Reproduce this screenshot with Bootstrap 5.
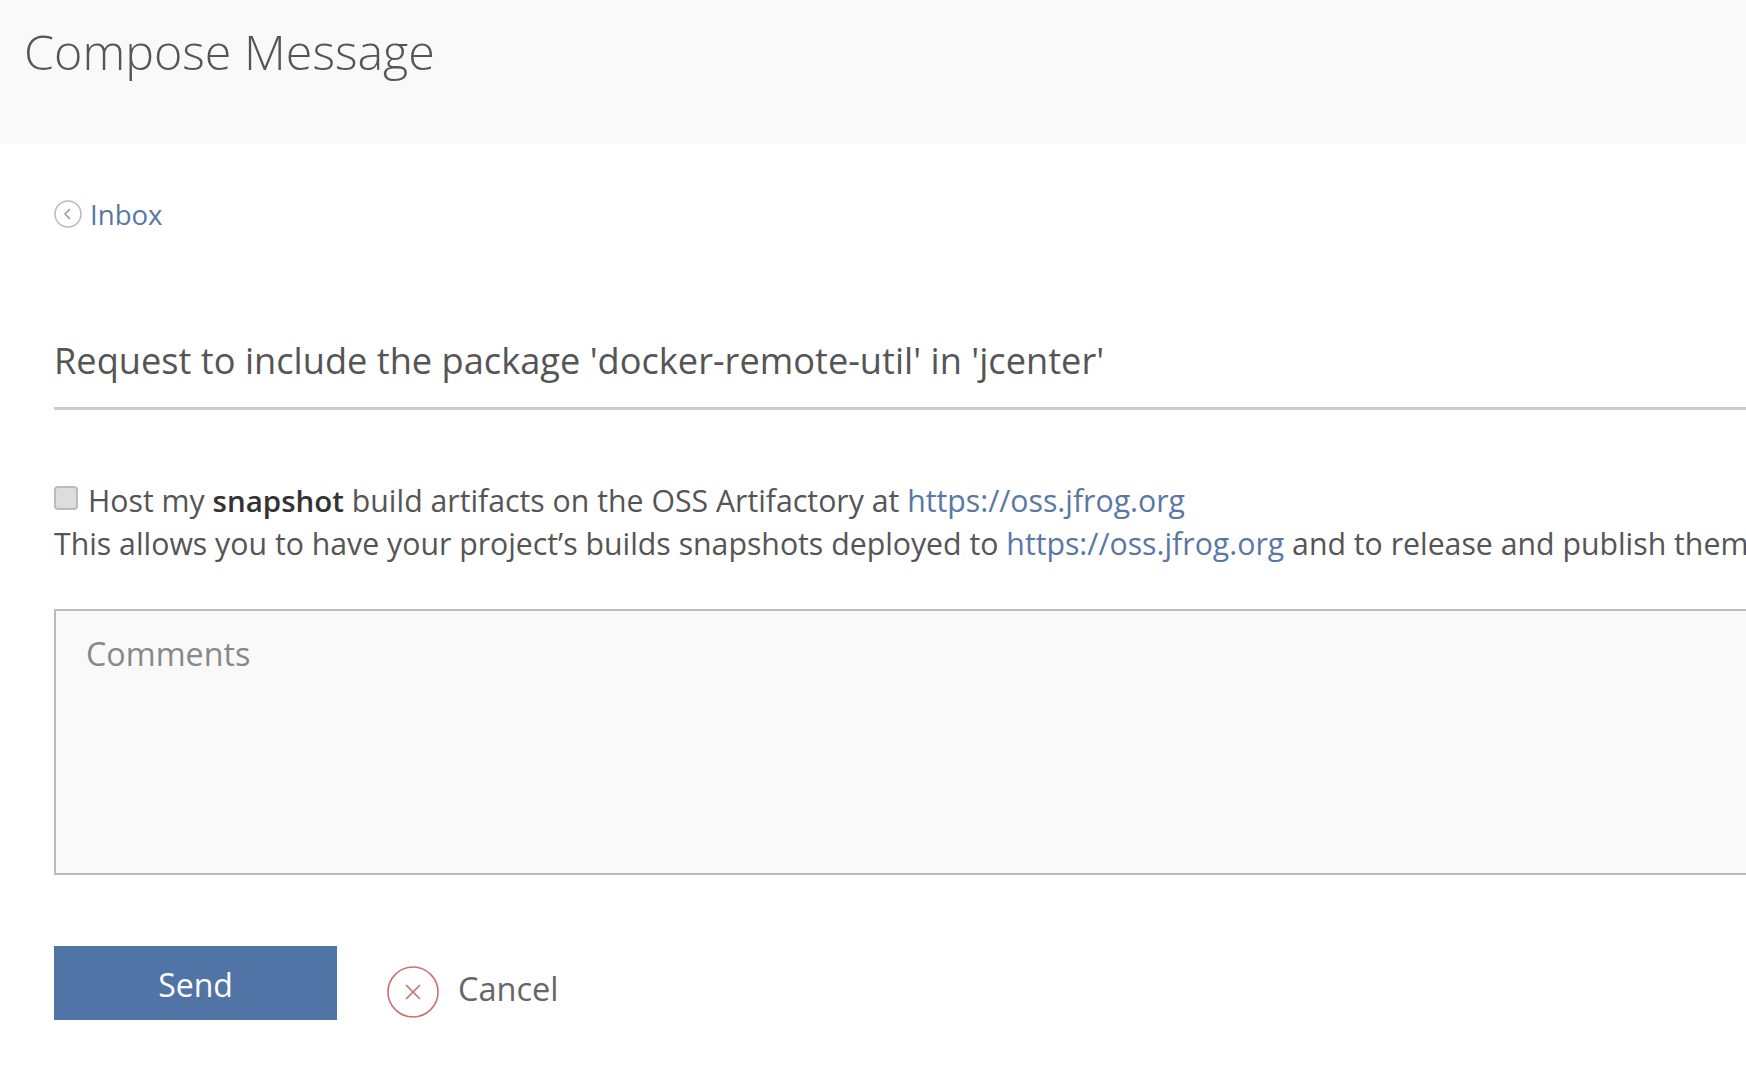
<!DOCTYPE html>
<html lang="en">
<head>
<meta charset="utf-8">
<title>Compose Message</title>
<link href="https://cdn.jsdelivr.net/npm/bootstrap@5.3.0/dist/css/bootstrap.min.css" rel="stylesheet">
<style>
html, body { height: 100%; overflow: hidden; }
body { font-family: "Open Sans", "Liberation Sans", sans-serif; color: #555; background: #fff; }
a { color: #5a77a5; text-decoration: none; }
.page-head { height: 144px; background: #f9f9f9; padding: 24px 0 0 24px; }
.page-head h1 { font-size: 48.4px; font-weight: 300; line-height: 54px; color: #555; margin: 0; }
.page-main { padding: 52px 0 0 54px; width: 1800px; }
.back-link { font-size: 27.6px; line-height: 36px; height: 36px; gap: 8px; }
.back-link svg { margin-top: -1px; }
.subject { font-size: 36.2px; line-height: 44px; color: #555; margin: 104px 0 0; padding-bottom: 25px; border-bottom: 3px solid #ccc; }
.snap-row { margin-top: 69px; font-size: 30.25px; line-height: 43px; white-space: nowrap; }
.snap-row strong { font-weight: 600; color: #333; font-size: 29.5px; }
.snap-box { width: 24px; height: 24px; margin: 0 10px 0 0; background: #ddd; border: 2px solid #bbb; border-radius: 4px; vertical-align: 2px; appearance: none; display: inline-block; }
.comment-box { width: 100%; height: 266px; margin-top: 44px; background: #f9f9f9; border: 2px solid #bbb; border-radius: 0; padding: 20px 30px; font-size: 32.3px; line-height: 44px; resize: none; color: #555; }
.comment-box::placeholder { color: #888; opacity: 1; }
.form-actions { margin-top: 71px; gap: 50px; }
.send-btn { width: 283px; height: 74px; background: #5174a6; color: #fff; border: 0; border-radius: 0; font-size: 32px; font-weight: 500; padding-top: 12px; padding-bottom: 8px; }
.send-btn:hover { background: #5174a6; color: #fff; }
.cancel-link { color: #666; font-size: 32.5px; gap: 19px; margin-top: 20px; }
.cancel-link span { margin-top: -5px; }
</style>
</head>
<body>
<header class="page-head"><h1>Compose Message</h1></header>
<main class="page-main">
  <a href="#" class="back-link d-inline-flex align-items-center">
    <svg width="28" height="28" viewBox="0 0 28 28" fill="none" aria-hidden="true"><circle cx="14" cy="14" r="13" stroke="#bbb" stroke-width="1.5"/><path d="M16 9l-5 5 5 5" stroke="#999" stroke-width="1.5"/></svg>
    <span>Inbox</span>
  </a>
  <h2 class="subject fw-normal">Request to include the package 'docker-remote-util' in 'jcenter'</h2>
  <form>
    <div class="snap-row">
      <input type="checkbox" class="snap-box" id="snapshot"><label for="snapshot">Host my <strong>snapshot</strong> build artifacts on the OSS Artifactory at <a href="#">https://oss.jfrog.org</a></label><br>
      This allows you to have your project’s builds snapshots deployed to <a href="#">https://oss.jfrog.org</a> and to release and publish them
    </div>
    <textarea class="form-control comment-box" placeholder="Comments"></textarea>
    <div class="form-actions d-flex align-items-start">
      <button type="button" class="btn send-btn">Send</button>
      <a href="#" class="cancel-link d-inline-flex align-items-center">
        <svg width="52" height="52" viewBox="0 0 52 52" fill="none" aria-hidden="true"><circle cx="26" cy="26" r="25" stroke="#c9706f" stroke-width="1.6"/><path d="M19 19l14 14M33 19L19 33" stroke="#c9706f" stroke-width="1.6"/></svg>
        <span>Cancel</span>
      </a>
    </div>
  </form>
</main>
</body>
</html>
